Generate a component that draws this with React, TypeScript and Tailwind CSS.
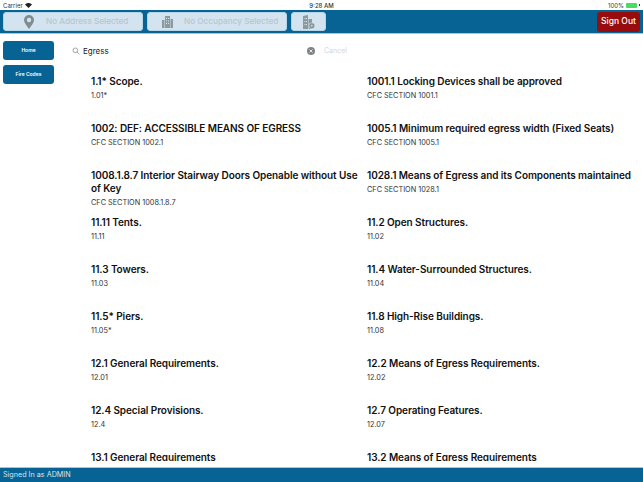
const rows = [
  { title: "1.1* Scope.", sub: "1.01*" },
  { title: "1001.1 Locking Devices shall be approved", sub: "CFC SECTION 1001.1" },
  { title: "1002: DEF: ACCESSIBLE MEANS OF EGRESS", sub: "CFC SECTION 1002.1" },
  { title: "1005.1 Minimum required egress width (Fixed Seats)", sub: "CFC SECTION 1005.1" },
  { title: "1008.1.8.7 Interior Stairway Doors Openable without Use of Key", sub: "CFC SECTION 1008.1.8.7" },
  { title: "1028.1 Means of Egress and its Components maintained", sub: "CFC SECTION 1028.1" },
  { title: "11.11 Tents.", sub: "11.11" },
  { title: "11.2 Open Structures.", sub: "11.02" },
  { title: "11.3 Towers.", sub: "11.03" },
  { title: "11.4 Water-Surrounded Structures.", sub: "11.04" },
  { title: "11.5* Piers.", sub: "11.05*" },
  { title: "11.8 High-Rise Buildings.", sub: "11.08" },
  { title: "12.1 General Requirements.", sub: "12.01" },
  { title: "12.2 Means of Egress Requirements.", sub: "12.02" },
  { title: "12.4 Special Provisions.", sub: "12.4" },
  { title: "12.7 Operating Features.", sub: "12.07" },
  { title: "13.1 General Requirements", sub: "13.01" },
  { title: "13.2 Means of Egress Requirements", sub: "13.02" },
];

const Building = () => (
  <svg width="11" height="13" viewBox="0 0 11 13" fill="#8c9a9e">
    <path d="M0 13V5h2.5v8zM3 13V1h5v12zM8.500 13V4H11v9z" />
    <path d="M4 3h1v1H4zM6 3h1v1H6zM4 5.500h1v1H4zM6 5.500h1v1H6zM4 8h1v1H4zM6 8h1v1H6z" fill="#d3e3ef" />
  </svg>
);

const BuildingAdd = () => (
  <svg width="12" height="14" viewBox="0 0 12 14" fill="#8c9a9e">
    <path d="M0 14V1l5-1v14zM5.500 14V4H9v10z" />
    <path d="M1.500 3h1v1h-1zM1.500 6h1v1h-1zM1.500 9h1v1h-1zM3 3h1v1H3zM3 6h1v1H3zM3 9h1v1H3z" fill="#d3e3ef" />
    <circle cx="8.800" cy="10.800" r="3" fill="#7d8b8f" stroke="#d3e3ef" strokeWidth="0.700" />
    <path d="M7.300 10.800h3M8.800 9.300v3" stroke="#d3e3ef" strokeWidth="0.700" />
  </svg>
);

const Item = ({ title, sub }: { title: string; sub: string }) => (
  <div className="min-h-[47px] pr-[6px]">
    <div className="text-[10px] leading-[13px] font-semibold tracking-[-0.08px] text-[#111]">{title}</div>
    <div className="mt-[2px] text-[7.3px] leading-[11px] text-[#333]">{sub}</div>
  </div>
);

export default function App() {
  return (
    <div className="w-[643px] h-[482px] flex flex-col overflow-hidden bg-white font-['Inter','Liberation_Sans',sans-serif]">
      {/* status bar */}
      <div className="h-[10px] flex items-center justify-between px-[3px] text-[6px] text-[#333] relative">
        <div className="flex items-center gap-[2px]">
          <span>Carrier</span>
          <svg width="7" height="5" viewBox="0 0 10 7" fill="#222">
            <path d="M5 7 0 2a7 7 0 0 1 10 0z" />
          </svg>
        </div>
        <span className="absolute left-1/2 -translate-x-1/2 font-medium">9:28 AM</span>
        <div className="flex items-center gap-[2px]">
          <span>100%</span>
          <div className="w-[11px] h-[5px] bg-[#4cd964] rounded-[1px]" />
          <div className="w-[1px] h-[2px] bg-[#333]" />
        </div>
      </div>

      {/* top bar */}
      <div className="h-[24px] bg-[#066394] border-b border-[#9cc8e0] flex items-center pl-[3px] pr-[3px] gap-[4px] shrink-0">
        <div className="w-[140px] h-[19px] bg-[#d3e3ef] border border-[#b5d5e8] rounded-[3px] flex items-center">
          <svg className="ml-[20px]" width="10" height="14" viewBox="0 0 10 14">
            <path d="M5 0a5 5 0 0 1 5 5c0 3-3 6-5 9-2-3-5-6-5-9a5 5 0 0 1 5-5z" fill="#808c90" />
            <circle cx="5" cy="5" r="2.2" fill="#d3e3ef" />
          </svg>
          <span className="ml-[12px] text-[8.2px] font-medium text-[#b9c6cf]">No Address Selected</span>
        </div>
        <div className="w-[140px] h-[19px] bg-[#d3e3ef] border border-[#b5d5e8] rounded-[3px] flex items-center">
          <div className="ml-[14px] flex"><Building /></div>
          <span className="ml-[11px] text-[8.2px] font-medium text-[#b9c6cf]">No Occupancy Selected</span>
        </div>
        <div className="w-[35px] h-[19px] bg-[#d3e3ef] border border-[#b5d5e8] rounded-[3px] flex items-center justify-center">
          <BuildingAdd />
        </div>
        <div className="ml-auto w-[43px] h-[20px] bg-[#970d0f] rounded-[3px] flex items-center justify-center text-[8.5px] font-medium text-white">
          Sign Out
        </div>
      </div>

      <div className="flex-1 min-h-0 flex">
        {/* sidebar */}
        <div className="w-[72px] shrink-0 pl-[3px] pt-[7px] flex flex-col gap-[5px]">
          <div className="w-[51px] h-[19px] bg-[#066394] rounded-[3px] flex items-center justify-center text-[5px] font-semibold text-white">
            Home
          </div>
          <div className="w-[51px] h-[19px] bg-[#066394] rounded-[3px] flex items-center justify-center text-[5px] font-semibold text-white">
            Fire Codes
          </div>
        </div>

        <div className="flex-1 min-w-0 flex flex-col">
          {/* search */}
          <div className="h-[41px] shrink-0 pt-[7px]">
            <div className="flex items-center h-[20px] w-full">
              <svg width="8" height="8" viewBox="0 0 24 24" fill="none" stroke="#8e8e93" strokeWidth="2.4">
                <circle cx="10" cy="10" r="7" />
                <path d="m15 15 7 7" />
              </svg>
              <span className="ml-[3px] w-[224px] text-[8px] text-[#222]">Egress</span>
              <svg width="8" height="8" viewBox="0 0 8 8">
                <circle cx="4" cy="4" r="4" fill="#808385" />
                <path d="m2.500 2.500 3 3m0-3-3 3" stroke="#fff" strokeWidth="0.800" />
              </svg>
              <span className="ml-[9px] text-[7px] text-[#d5d5d7]">Cancel</span>
            </div>
          </div>

          {/* results */}
          <div className="flex-1 min-h-0 overflow-hidden pl-[19px] mb-[6px]">
            <div className="grid grid-cols-[276px_270px]">
              {rows.map((r) => (
                <Item key={r.title} title={r.title} sub={r.sub} />
              ))}
            </div>
          </div>
        </div>
      </div>

      {/* footer */}
      <div className="h-[15px] shrink-0 bg-[#066394] border-t border-[#9cc8e0] flex items-center px-[3px] text-[7.2px] text-[#d6e6f0]">
        Signed In as ADMIN
      </div>
    </div>
  );
}
